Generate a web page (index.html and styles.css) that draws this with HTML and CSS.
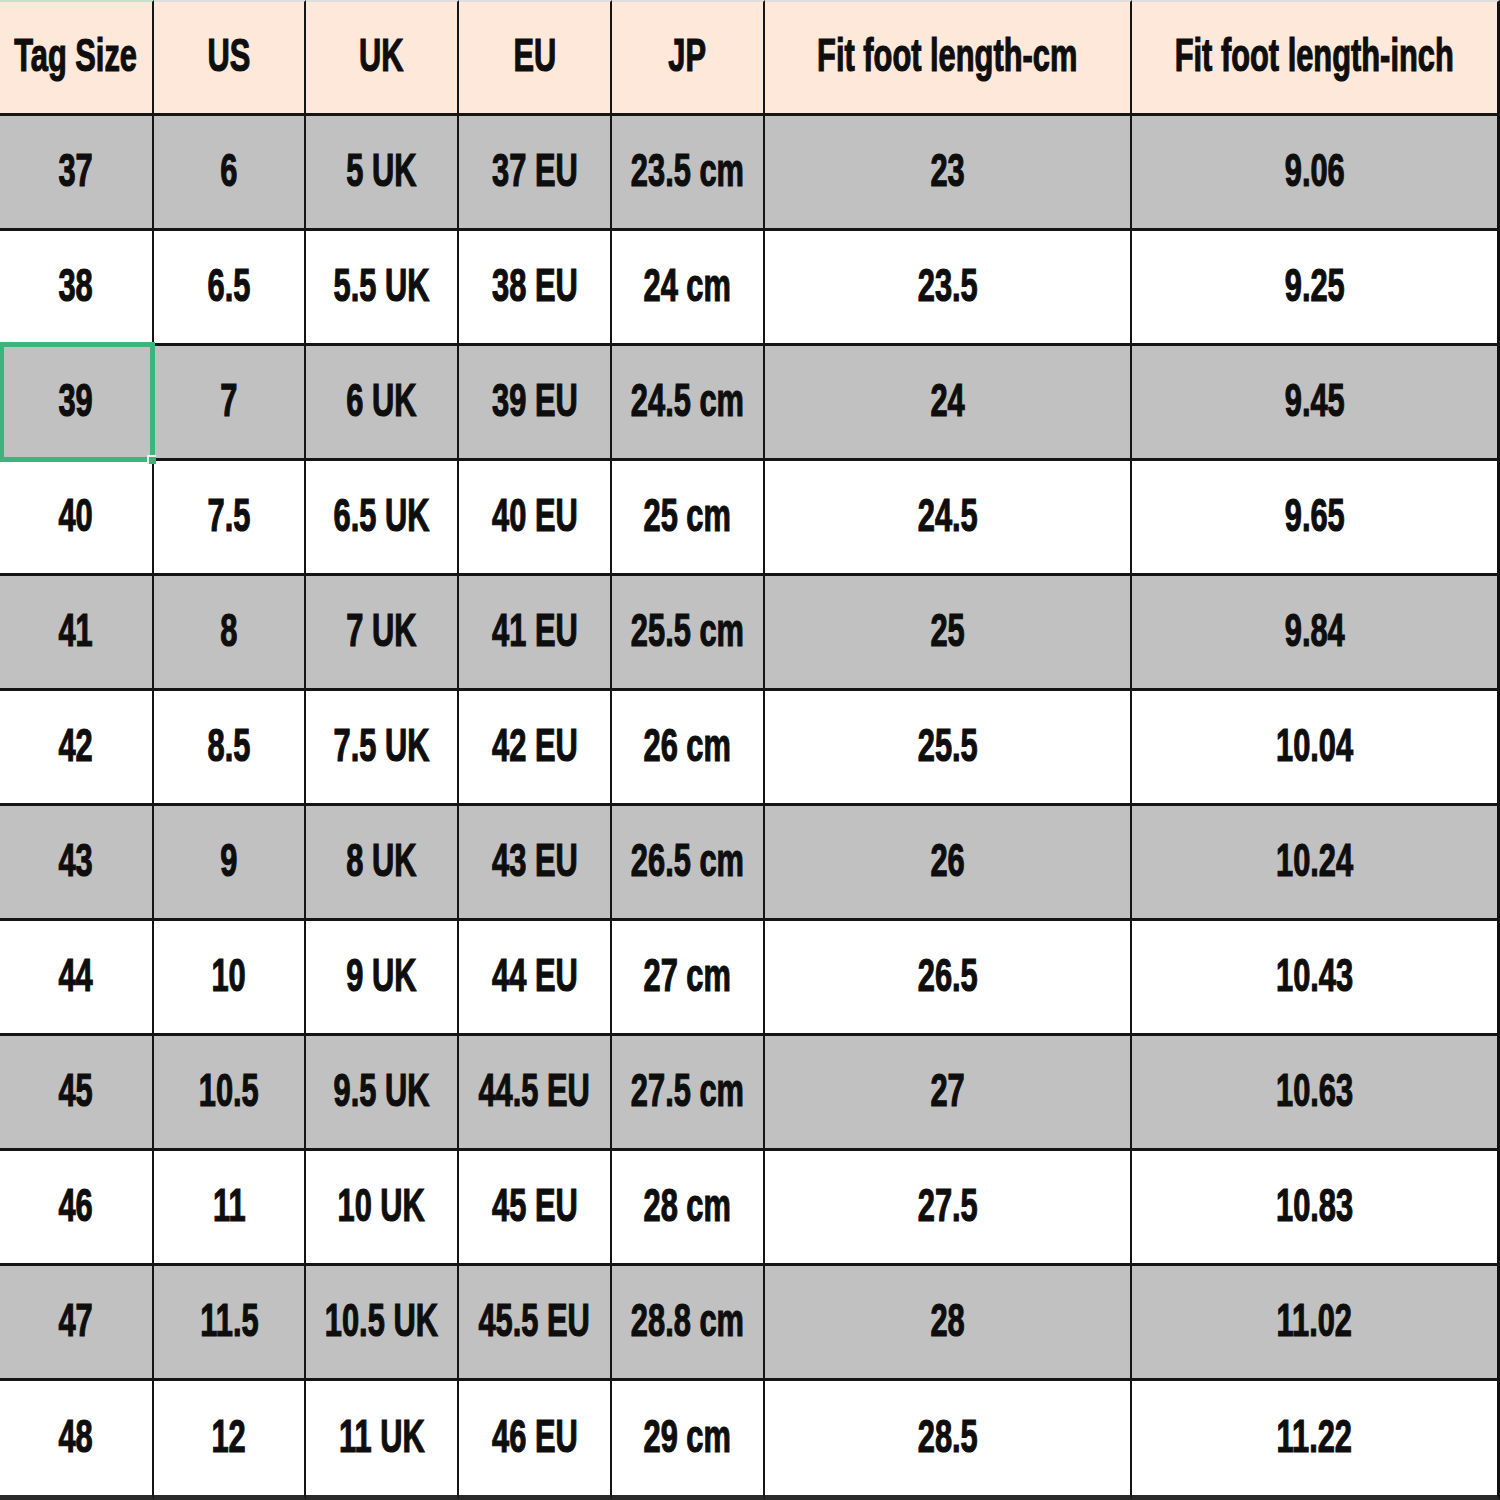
FILE: index.html
```html
<!DOCTYPE html>
<html>
<head>
<meta charset="utf-8">
<link rel="stylesheet" href="styles.css">
</head>
<body>
<div class="sheet">
  <div class="cell head"><span class="t">Tag Size</span></div>
  <div class="cell head"><span class="t">US</span></div>
  <div class="cell head"><span class="t">UK</span></div>
  <div class="cell head"><span class="t">EU</span></div>
  <div class="cell head"><span class="t">JP</span></div>
  <div class="cell head"><span class="t">Fit foot length-cm</span></div>
  <div class="cell head last"><span class="t">Fit foot length-inch</span></div>

  <div class="cell gray"><span class="t">37</span></div>
  <div class="cell gray"><span class="t">6</span></div>
  <div class="cell gray"><span class="t">5 UK</span></div>
  <div class="cell gray"><span class="t">37 EU</span></div>
  <div class="cell gray"><span class="t">23.5 cm</span></div>
  <div class="cell gray"><span class="t">23</span></div>
  <div class="cell gray last"><span class="t">9.06</span></div>

  <div class="cell"><span class="t">38</span></div>
  <div class="cell"><span class="t">6.5</span></div>
  <div class="cell"><span class="t">5.5 UK</span></div>
  <div class="cell"><span class="t">38 EU</span></div>
  <div class="cell"><span class="t">24 cm</span></div>
  <div class="cell"><span class="t">23.5</span></div>
  <div class="cell last"><span class="t">9.25</span></div>

  <div class="cell gray selected"><span class="t">39</span></div>
  <div class="cell gray"><span class="t">7</span></div>
  <div class="cell gray"><span class="t">6 UK</span></div>
  <div class="cell gray"><span class="t">39 EU</span></div>
  <div class="cell gray"><span class="t">24.5 cm</span></div>
  <div class="cell gray"><span class="t">24</span></div>
  <div class="cell gray last"><span class="t">9.45</span></div>

  <div class="cell"><span class="t">40</span></div>
  <div class="cell"><span class="t">7.5</span></div>
  <div class="cell"><span class="t">6.5 UK</span></div>
  <div class="cell"><span class="t">40 EU</span></div>
  <div class="cell"><span class="t">25 cm</span></div>
  <div class="cell"><span class="t">24.5</span></div>
  <div class="cell last"><span class="t">9.65</span></div>

  <div class="cell gray"><span class="t">41</span></div>
  <div class="cell gray"><span class="t">8</span></div>
  <div class="cell gray"><span class="t">7 UK</span></div>
  <div class="cell gray"><span class="t">41 EU</span></div>
  <div class="cell gray"><span class="t">25.5 cm</span></div>
  <div class="cell gray"><span class="t">25</span></div>
  <div class="cell gray last"><span class="t">9.84</span></div>

  <div class="cell"><span class="t">42</span></div>
  <div class="cell"><span class="t">8.5</span></div>
  <div class="cell"><span class="t">7.5 UK</span></div>
  <div class="cell"><span class="t">42 EU</span></div>
  <div class="cell"><span class="t">26 cm</span></div>
  <div class="cell"><span class="t">25.5</span></div>
  <div class="cell last"><span class="t">10.04</span></div>

  <div class="cell gray"><span class="t">43</span></div>
  <div class="cell gray"><span class="t">9</span></div>
  <div class="cell gray"><span class="t">8 UK</span></div>
  <div class="cell gray"><span class="t">43 EU</span></div>
  <div class="cell gray"><span class="t">26.5 cm</span></div>
  <div class="cell gray"><span class="t">26</span></div>
  <div class="cell gray last"><span class="t">10.24</span></div>

  <div class="cell"><span class="t">44</span></div>
  <div class="cell"><span class="t">10</span></div>
  <div class="cell"><span class="t">9 UK</span></div>
  <div class="cell"><span class="t">44 EU</span></div>
  <div class="cell"><span class="t">27 cm</span></div>
  <div class="cell"><span class="t">26.5</span></div>
  <div class="cell last"><span class="t">10.43</span></div>

  <div class="cell gray"><span class="t">45</span></div>
  <div class="cell gray"><span class="t">10.5</span></div>
  <div class="cell gray"><span class="t">9.5 UK</span></div>
  <div class="cell gray"><span class="t">44.5 EU</span></div>
  <div class="cell gray"><span class="t">27.5 cm</span></div>
  <div class="cell gray"><span class="t">27</span></div>
  <div class="cell gray last"><span class="t">10.63</span></div>

  <div class="cell"><span class="t">46</span></div>
  <div class="cell"><span class="t">11</span></div>
  <div class="cell"><span class="t">10 UK</span></div>
  <div class="cell"><span class="t">45 EU</span></div>
  <div class="cell"><span class="t">28 cm</span></div>
  <div class="cell"><span class="t">27.5</span></div>
  <div class="cell last"><span class="t">10.83</span></div>

  <div class="cell gray"><span class="t">47</span></div>
  <div class="cell gray"><span class="t">11.5</span></div>
  <div class="cell gray"><span class="t">10.5 UK</span></div>
  <div class="cell gray"><span class="t">45.5 EU</span></div>
  <div class="cell gray"><span class="t">28.8 cm</span></div>
  <div class="cell gray"><span class="t">28</span></div>
  <div class="cell gray last"><span class="t">11.02</span></div>

  <div class="cell bottom"><span class="t">48</span></div>
  <div class="cell bottom"><span class="t">12</span></div>
  <div class="cell bottom"><span class="t">11 UK</span></div>
  <div class="cell bottom"><span class="t">46 EU</span></div>
  <div class="cell bottom"><span class="t">29 cm</span></div>
  <div class="cell bottom"><span class="t">28.5</span></div>
  <div class="cell bottom last"><span class="t">11.22</span></div>
</div>
</body>
</html>
```

FILE: styles.css
```css
html, body {
  margin: 0;
  padding: 0;
  background: #ffffff;
}

.sheet {
  width: 1500px;
  height: 1500px;
  display: grid;
  grid-template-columns: 154px 152px 153px 153px 153px 367px 368px;
  grid-template-rows: 116px repeat(11, 115px) 119px;
  font-family: "Liberation Sans", Arial, sans-serif;
  font-weight: bold;
  color: #0e0e0e;
}

.cell {
  box-sizing: border-box;
  display: flex;
  align-items: center;
  justify-content: center;
  border-right: 2px solid #151515;
  border-bottom: 3px solid #151515;
  background: #ffffff;
  position: relative;
  overflow: hidden;
}

.cell.last {
  border-right: 3px solid #111111;
}

.cell.head {
  background: #fde8da;
  border-top: 2px solid #dedede;
}

.cell.head:first-child {
  border-top-color: #bfe3cc;
}

.cell.gray {
  background: #c1c1c1;
}

.cell.bottom {
  border-bottom: 5px solid #2a2a2a;
}

.t {
  display: inline-block;
  font-size: 46px;
  line-height: 1;
  white-space: nowrap;
  transform: scaleX(0.67);
  -webkit-text-stroke: 1.2px #0e0e0e;
  margin-top: -4px;
}

.cell.head .t {
  margin-top: -5px;
}

.cell.selected {
  overflow: visible;
  z-index: 2;
}

.cell.selected::after {
  content: "";
  position: absolute;
  left: 0;
  top: -4px;
  right: -3px;
  bottom: -4px;
  border: 5px solid #3db47c;
  border-left-width: 4px;
  box-sizing: border-box;
}

.cell.selected::before {
  content: "";
  position: absolute;
  right: -4px;
  bottom: -6px;
  width: 7px;
  height: 7px;
  background: #3db47c;
  border-left: 2px solid #e8f5ee;
  border-top: 2px solid #e8f5ee;
  z-index: 3;
}
```
